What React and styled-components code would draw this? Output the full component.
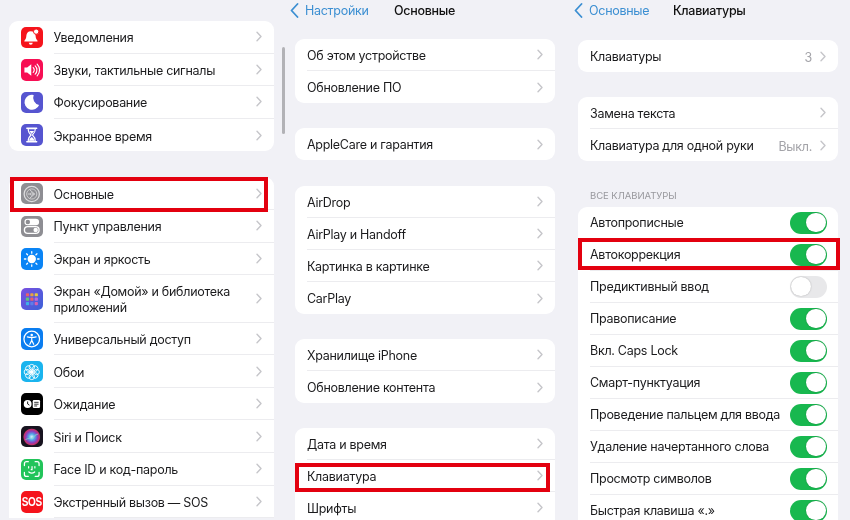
import React from "react";
import styled, { createGlobalStyle } from "styled-components";

const Global = createGlobalStyle`
  html, body { margin: 0; padding: 0; background: #f1f1f6; }
  body { font-family: Inter, "Noto Sans", "Liberation Sans", sans-serif; }
`;

const Page = styled.div`
  position: relative;
  width: 850px;
  height: 520px;
  overflow: hidden;
  background: #f1f1f6;
  display: grid;
  grid-template-columns: 295px 283px 272px;
  filter: blur(0.35px);
`;

const Column = styled.div`
  display: flex;
  flex-direction: column;
  padding: ${(p) => p.$pad};
`;

const Nav = styled.div`
  display: flex;
  align-items: center;
  height: 20px;
  margin-left: ${(p) => p.$offset}px;
  margin-bottom: ${(p) => p.$below}px;
  font-size: 12.5px;
  letter-spacing: -0.28px;
`;

const BackLink = styled.span`
  color: #3c8fd2;
  margin-left: 6px;
  width: ${(p) => p.$width}px;
  white-space: nowrap;
`;

const Title = styled.span`
  color: #111;
  font-weight: 500;
  white-space: nowrap;
`;

const Card = styled.div`
  background: #fff;
  border-radius: ${(p) => (p.$open ? "9px 9px 0 0" : "9px")};
  margin-bottom: ${(p) => p.$gap ?? 0}px;
  flex-shrink: 0;
`;

const SectionLabel = styled.div`
  font-size: 9.5px;
  letter-spacing: -0.05px;
  color: #98989d;
  padding-left: 12px;
  height: 12px;
  line-height: 12px;
  margin-bottom: 5px;
`;

const Row = styled.div`
  position: relative;
  display: flex;
  align-items: center;
  height: ${(p) => p.$height}px;
  padding-left: 12px;
  box-sizing: border-box;
`;

const Body = styled.div`
  flex: 1;
  min-width: 0;
  align-self: stretch;
  display: flex;
  align-items: center;
  padding-right: ${(p) => p.$right}px;
  border-bottom: ${(p) => (p.$last ? "none" : "1px solid #ececef")};
`;

const Label = styled.span`
  flex: 1;
  font-size: 12.5px;
  line-height: 16px;
  letter-spacing: -0.28px;
  padding-top: ${(p) => p.$nudge ?? 0}px;
  color: #1b1b1d;
`;

const Value = styled.span`
  font-size: 12.5px;
  letter-spacing: -0.28px;
  color: #a3a3a8;
  margin-right: 8px;
  padding-top: 2px;
`;

const Tile = styled.div`
  width: 21.5px;
  height: 21.5px;
  border-radius: 5px;
  flex-shrink: 0;
  margin-right: 11px;
  background: ${(p) => p.$bg};
  display: flex;
  align-items: center;
  justify-content: center;
  overflow: hidden;
`;

const SosText = styled.span`
  color: #fff;
  font-family: "Liberation Sans", sans-serif;
  font-weight: 700;
  font-size: 10px;
  letter-spacing: -0.4px;
  transform: scaleY(1.25);
`;

const Toggle = styled.div`
  position: relative;
  width: 37px;
  height: 22px;
  border-radius: 11px;
  background: ${(p) => (p.$on ? "#18b84f" : "#e8e8ea")};
`;

const Knob = styled.div`
  position: absolute;
  top: 1.25px;
  left: ${(p) => (p.$on ? 16.25 : 1.25)}px;
  width: 19.5px;
  height: 19.5px;
  border-radius: 50%;
  background: #fff;
  box-shadow: 0 0 1.5px rgba(0, 0, 0, 0.3);
`;

const Highlight = styled.div`
  position: absolute;
  top: ${(p) => p.$box[0]}px;
  right: ${(p) => p.$box[1]}px;
  bottom: ${(p) => p.$box[2]}px;
  left: ${(p) => p.$box[3]}px;
  border: 4px solid #e3000f;
  pointer-events: none;
`;

const ScrollIndicator = styled.div`
  position: absolute;
  left: 282px;
  top: 47px;
  width: 2.5px;
  height: 87px;
  border-radius: 2px;
  background: #b2b2b6;
`;

const Chevron = () => (
  <svg width="6" height="11" viewBox="0 0 6 11" fill="none">
    <path d="M1 1.200l4 4.300-4 4.300" stroke="#c6c6ca" strokeWidth="1.400" strokeLinecap="round" strokeLinejoin="round" />
  </svg>
);

const BackChevron = () => (
  <svg width="9" height="15" viewBox="0 0 9 15" fill="none">
    <path d="M7.500 1L1.500 7.500l6 6.500" stroke="#3c8fd2" strokeWidth="1.800" strokeLinecap="round" strokeLinejoin="round" />
  </svg>
);

const Svg = ({ children }) => (
  <svg width="22" height="22" viewBox="0 0 22 22" fill="none">{children}</svg>
);

const BellIcon = () => (
  <Svg>
    <path d="M10 5c-2.800 0-4.300 2-4.500 4.500-.2 2.500-.6 3.800-2 5.300-.3.400-.1.900.4.900h12.600c.5 0 .7-.5.4-.9-1.400-1.500-1.800-2.800-2-5.300C14.300 7 12.800 5 10 5z" fill="#fff" />
    <path d="M8 17a2 2 0 0 0 4 0z" fill="#fff" />
    <circle cx="15.500" cy="5.500" r="2.700" fill="#fff" stroke="#f5141c" strokeWidth="1" />
  </Svg>
);

const SoundIcon = () => (
  <Svg>
    <path d="M3.500 8.500h2.800L10.500 5v12l-4.200-3.500H3.500z" fill="#fff" />
    <path d="M12.500 8.500a3.500 3.500 0 0 1 0 5M14.500 6.700a6 6 0 0 1 0 8.600M16.500 5a8.500 8.500 0 0 1 0 12" stroke="#fff" strokeWidth="1.200" strokeLinecap="round" />
  </Svg>
);

const MoonIcon = () => (
  <Svg>
    <path d="M13 3.800A7.700 7.700 0 1 0 18.500 14 7.500 7.500 0 0 1 13 3.800z" fill="#fff" />
  </Svg>
);

const HourglassIcon = () => (
  <Svg>
    <path d="M6 4h10M6 18h10" stroke="#fff" strokeWidth="1.600" strokeLinecap="round" />
    <path d="M7.300 4.500h7.400c0 3-1.300 5-3 6.500 1.700 1.500 3 3.500 3 6.500H7.300c0-3 1.300-5 3-6.500-1.700-1.500-3-3.500-3-6.500z" stroke="#fff" strokeWidth="1.100" />
    <path d="M8.500 7h5l-2.500 3zM8.300 17c.3-2 1.300-3 2.700-4 1.400 1 2.400 2 2.700 4z" fill="#fff" />
  </Svg>
);

const GearIcon = () => (
  <Svg>
    <circle cx="11" cy="11" r="7.800" stroke="#dcdcde" strokeWidth="1.300" />
    <circle cx="11" cy="11" r="5.200" stroke="#dcdcde" strokeWidth="0.800" />
    <path d="M8.800 6.600L14 11l-5.200 4.400M14 11H7" stroke="#dcdcde" strokeWidth="0.900" />
    <circle cx="11" cy="11" r="1.300" fill="#8e8e93" stroke="#dcdcde" strokeWidth="0.800" />
  </Svg>
);

const SwitchesIcon = () => (
  <Svg>
    <rect x="3.500" y="3.500" width="15" height="6.800" rx="3.400" fill="#fff" />
    <circle cx="7" cy="6.900" r="2.300" fill="#8e8e93" />
    <rect x="3.500" y="11.700" width="15" height="6.800" rx="3.400" stroke="#fff" strokeWidth="1.400" />
    <circle cx="15" cy="15.100" r="2.300" fill="#fff" />
  </Svg>
);

const SunIcon = () => (
  <Svg>
    <circle cx="11" cy="11" r="4.300" fill="#fff" />
    <path d="M11 3.500v1.500M11 17v1.500M3.500 11H5M17 11h1.500M5.700 5.700l1 1M15.300 15.300l1 1M5.700 16.300l1-1M15.300 6.700l1-1" stroke="#fff" strokeWidth="1.300" strokeLinecap="round" />
  </Svg>
);

const GridIcon = () => {
  const colors = ["#e8606c", "#e9a23f", "#e8c93f", "#5fc47a", "#e8606c", "#c06ad8", "#3fb0e8", "#5f7ee8", "#d860b0"];
  return (
    <Svg>
      {colors.map((c, i) => (
        <rect key={i} x={5 + (i % 3) * 4.500} y={5 + Math.floor(i / 3) * 4.500} width="3.300" height="3.300" rx="0.900" fill={c} />
      ))}
    </Svg>
  );
};

const AccessIcon = () => (
  <Svg>
    <circle cx="11" cy="11" r="8" stroke="#fff" strokeWidth="1.300" />
    <circle cx="11" cy="6.800" r="1.300" fill="#fff" />
    <path d="M6.500 8.800c3 .8 6 .8 9 0M11 9.400v3M11 12.400l-2 4M11 12.400l2 4" stroke="#fff" strokeWidth="1.200" strokeLinecap="round" />
  </Svg>
);

const FlowerIcon = () => (
  <Svg>
    {[0, 45, 90, 135, 180, 225, 270, 315].map((a) => (
      <circle key={a} cx="11" cy="6" r="2.800" stroke="#fff" strokeWidth="0.900" transform={`rotate(${a} 11 11)`} />
    ))}
    <circle cx="11" cy="11" r="2" fill="#fff" />
  </Svg>
);

const StandbyIcon = () => (
  <Svg>
    <circle cx="6.800" cy="11" r="4" fill="#fff" />
    <path d="M6.800 8.800V11l1.500 1" stroke="#000" strokeWidth="0.900" strokeLinecap="round" />
    <rect x="12" y="7" width="7.500" height="8" rx="1.200" fill="#fff" />
    <path d="M13.500 9.300h4.500M13.500 11.200h4.500M13.500 13h3" stroke="#000" strokeWidth="0.800" />
  </Svg>
);

const SiriIcon = () => (
  <Svg>
    <defs>
      <radialGradient id="siri" cx="50%" cy="50%" r="50%">
        <stop offset="0%" stopColor="#dff4ff" />
        <stop offset="35%" stopColor="#4fa8e8" />
        <stop offset="65%" stopColor="#8a3fc0" />
        <stop offset="88%" stopColor="#c8306a" />
        <stop offset="100%" stopColor="#1f1a2a" />
      </radialGradient>
    </defs>
    <circle cx="11" cy="11" r="9" fill="url(#siri)" />
    <path d="M4.500 14c3-3 5-1 7-2s3-4 6-4" stroke="#7fe0c8" strokeWidth="1.200" opacity="0.600" />
  </Svg>
);

const FaceIcon = () => (
  <Svg>
    <path d="M3.500 7.500V5.500a2 2 0 0 1 2-2h2M14.500 3.500h2a2 2 0 0 1 2 2v2M18.500 14.500v2a2 2 0 0 1-2 2h-2M7.500 18.500h-2a2 2 0 0 1-2-2v-2" stroke="#fff" strokeWidth="1.300" strokeLinecap="round" />
    <path d="M7.800 8.500v1.500M14.200 8.500v1.500M11.300 8.500v3.200h-.9M8 14c1.800 1.500 4.200 1.500 6 0" stroke="#fff" strokeWidth="1.200" strokeLinecap="round" />
  </Svg>
);

const settingsA = [
  { label: "Уведомления", bg: "#f5141c", icon: <BellIcon /> },
  { label: "Звуки, тактильные сигналы", bg: "#f70f54", icon: <SoundIcon /> },
  { label: "Фокусирование", bg: "#5655d0", icon: <MoonIcon /> },
  { label: "Экранное время", bg: "#5655d0", icon: <HourglassIcon /> },
];

const settingsB = [
  { label: "Основные", bg: "#8e8e93", icon: <GearIcon />, box: [-0.5, 6, -2, 1] },
  { label: "Пункт управления", bg: "#8e8e93", icon: <SwitchesIcon /> },
  { label: "Экран и яркость", bg: "#0a84f5", icon: <SunIcon /> },
  { label: "Экран «Домой» и библиотека приложений", bg: "linear-gradient(135deg,#7a4fe0,#3b62d8)", icon: <GridIcon />, height: 47.500 },
  { label: "Универсальный доступ", bg: "#0a7df0", icon: <AccessIcon /> },
  { label: "Обои", bg: "#1ab4ee", icon: <FlowerIcon /> },
  { label: "Ожидание", bg: "#000", icon: <StandbyIcon /> },
  { label: "Siri и Поиск", bg: "#17131f", icon: <SiriIcon /> },
  { label: "Face ID и код-пароль", bg: "#22c45a", icon: <FaceIcon /> },
  { label: "Экстренный вызов — SOS", bg: "#f5141c", icon: <SosText>SOS</SosText> },
];

const generalGroups = [
  { gap: 25, rows: [{ label: "Об этом устройстве" }, { label: "Обновление ПО" }] },
  { gap: 26, rows: [{ label: "AppleCare и гарантия" }] },
  { gap: 25, rows: [{ label: "AirDrop" }, { label: "AirPlay и Handoff" }, { label: "Картинка в картинке" }, { label: "CarPlay" }] },
  { gap: 25, rows: [{ label: "Хранилище iPhone" }, { label: "Обновление контента" }] },
  { gap: 0, open: true, rows: [{ label: "Дата и время" }, { label: "Клавиатура", box: [3, 5, 0, 0] }, { label: "Шрифты" }] },
];

const toggles = [
  { label: "Автопрописные", on: true },
  { label: "Автокоррекция", on: true, box: [-1, -2, 1, 0] },
  { label: "Предиктивный ввод", on: false },
  { label: "Правописание", on: true },
  { label: "Вкл. Caps Lock", on: true },
  { label: "Смарт-пунктуация", on: true },
  { label: "Проведение пальцем для ввода", on: true },
  { label: "Удаление начертанного слова", on: true },
  { label: "Просмотр символов", on: true },
  { label: "Быстрая клавиша «.»", on: true },
];

const IconRows = ({ rows, open }) =>
  rows.map((r, i) => (
    <Row key={r.label} $height={r.height ?? 32.600}>
      <Tile $bg={r.bg}>{r.icon}</Tile>
      <Body $right={12} $last={!open && i === rows.length - 1}>
        <Label $nudge={3}>{r.label}</Label>
        <Chevron />
      </Body>
      {r.box && <Highlight $box={r.box} />}
    </Row>
  ));

const PlainRow = ({ label, value, box, last }) => (
  <Row $height={32}>
    <Body $right={12} $last={last}>
      <Label $nudge={2}>{label}</Label>
      {value && <Value>{value}</Value>}
      <Chevron />
    </Body>
    {box && <Highlight $box={box} />}
  </Row>
);

export default function App() {
  return (
    <Page>
      <Global />
      <Column $pad="21px 21px 0 9px">
        <Card $gap={26}>
          <IconRows rows={settingsA} />
        </Card>
        <Card $open>
          <IconRows rows={settingsB} open />
        </Card>
      </Column>

      <Column $pad="0 23px 0 0">
        <Nav $offset={-5} $below={19}>
          <BackChevron />
          <BackLink $width={89}>Настройки</BackLink>
          <Title>Основные</Title>
        </Nav>
        {generalGroups.map((g) => (
          <Card key={g.rows[0].label} $gap={g.gap} $open={g.open}>
            {g.rows.map((r, i) => (
              <PlainRow key={r.label} label={r.label} box={r.box} last={!g.open && i === g.rows.length - 1} />
            ))}
          </Card>
        ))}
      </Column>

      <Column $pad="0 12px 0 0">
        <Nav $offset={-4} $below={20}>
          <BackChevron />
          <BackLink $width={84}>Основные</BackLink>
          <Title>Клавиатуры</Title>
        </Nav>
        <Card $gap={25}>
          <PlainRow label="Клавиатуры" value="3" last />
        </Card>
        <Card $gap={29}>
          <PlainRow label="Замена текста" />
          <PlainRow label="Клавиатура для одной руки" value="Выкл." last />
        </Card>
        <SectionLabel>ВСЕ КЛАВИАТУРЫ</SectionLabel>
        <Card $open>
          {toggles.map((t) => (
            <Row key={t.label} $height={32}>
              <Body $right={11}>
                <Label $nudge={1}>{t.label}</Label>
                <Toggle $on={t.on}>
                  <Knob $on={t.on} />
                </Toggle>
              </Body>
              {t.box && <Highlight $box={t.box} />}
            </Row>
          ))}
        </Card>
      </Column>
      <ScrollIndicator />
    </Page>
  );
}
